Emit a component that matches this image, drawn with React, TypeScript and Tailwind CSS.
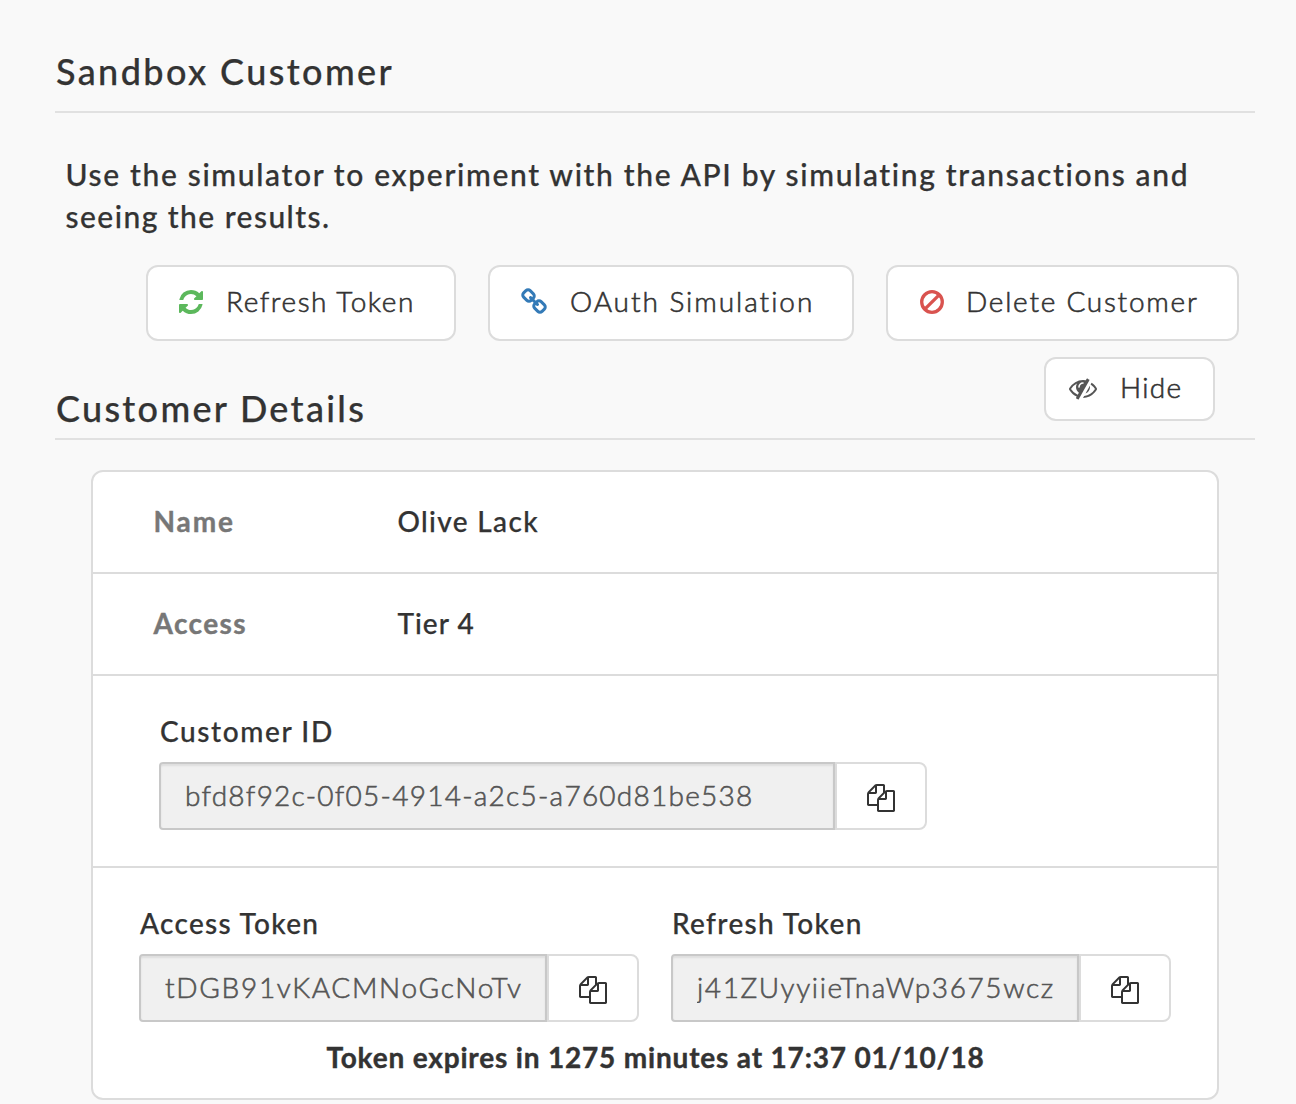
import type { ReactNode } from "react";

const ICONS = {
  refresh:
    "M1639 1056q0 5-1 7-64 268-268 434.5t-478 166.5q-146 0-282.5-55t-243.5-157l-129 129q-19 19-45 19t-45-19-19-45v-448q0-26 19-45t45-19h448q26 0 45 19t19 45-19 45l-137 137q71 66 161 102t187 36q134 0 250-65t186-179q11-17 53-117 8-23 30-23h192q13 0 22.5 9.5t9.5 22.5zm25-800v448q0 26-19 45t-45 19h-448q-26 0-45-19t-19-45 19-45l138-138q-148-137-349-137-134 0-250 65t-186 179q-11 17-53 117-8 23-30 23h-199q-13 0-22.5-9.5t-9.5-22.5v-7q65-268 270-434.5t480-166.5q146 0 284 55.5t245 156.5l130-129q19-19 45-19t45 19 19 45z",
  chain:
    "M1520 1216q0-40-28-68l-208-208q-28-28-68-28-42 0-72 32 3 3 19 18.5t21.5 21.5 15 19 13 25.5 3.5 27.5q0 40-28 68t-68 28q-15 0-27.5-3.5t-25.5-13-19-15-21.5-21.5-18.5-19q-33 31-33 73 0 40 28 68l206 207q27 27 68 27 40 0 68-26l147-146q28-28 28-67zm-703-705q0-40-28-68l-206-207q-28-28-68-28-39 0-68 27l-147 146q-28 28-28 67 0 40 28 68l208 208q27 27 68 27 42 0 72-31-3-3-19-18.5t-21.5-21.5-15-19-13-25.5-3.5-27.5q0-40 28-68t68-28q15 0 27.5 3.5t25.5 13 19 15 21.5 21.5 18.5 19q33-31 33-73zm895 705q0 120-85 203l-147 146q-83 83-203 83-121 0-204-85l-206-207q-83-83-83-203 0-123 88-209l-88-88q-86 88-208 88-120 0-204-84l-208-208q-84-84-84-204t85-203l147-146q83-83 203-83 121 0 204 85l206 207q83 83 83 203 0 123-88 209l88 88q86-88 208-88 120 0 204 84l208 208q84 84 84 204z",
  eyeSlash:
    "M555 1335l78-141q-87-63-136-159t-49-203q0-121 61-225-229 117-381 353 167 258 427 375zm389-759q0-20-14-34t-34-14q-125 0-214.5 89.5t-89.5 214.5q0 20 14 34t34 14 34-14 14-34q0-86 61-147t147-61q20 0 34-14t14-34zm363-191q0 7-1 9-106 189-316 567t-315 566l-49 89q-10 16-28 16-12 0-134-70-16-10-16-28 0-12 44-87-143-65-263.5-173t-208.5-245q-20-31-20-69t20-69q153-235 380-371t496-136q89 0 180 17l54-97q10-16 28-16 5 0 18 6t31 15.5 33 18.5 31.5 18.5 19.5 11.5q16 10 16 27zm37 447q0 139-79 253.5t-209 164.5l280-502q8 45 8 84zm448 128q0 35-20 69-39 64-109 145-150 172-347.5 267t-419.5 95l74-132q212-18 392.5-137t301.5-307q-115-179-282-294l63-112q95 64 182.5 153t144.5 182q20 34 20 69z",
  files:
    "M1696 384q40 0 68 28t28 68v1216q0 40-28 68t-68 28h-960q-40 0-68-28t-28-68v-288h-544q-40 0-68-28t-28-68v-672q0-40 20-88t48-76l408-408q28-28 76-48t88-20h416q40 0 68 28t28 68v328q68-40 128-40h416zm-544 213l-299 299h299v-299zm-640-384l-299 299h299v-299zm196 647l316-316v-416h-384v416q0 40-28 68t-68 28h-416v640h512v-256q0-40 20-88t48-76zm956 804v-1152h-384v416q0 40-28 68t-68 28h-416v640h896z",
};

function Icon({ name, className }: { name: keyof typeof ICONS; className?: string }) {
  return (
    <svg viewBox="0 0 1792 1792" fill="currentColor" className={`size-7 shrink-0 ${className ?? ""}`}>
      <path d={ICONS[name]} />
    </svg>
  );
}

function BanIcon() {
  return (
    <svg viewBox="0 0 24 24" fill="none" stroke="currentColor" strokeWidth="3.3" className="size-6 shrink-0 text-[#d9534f]">
      <circle cx="12" cy="12" r="10.3" />
      <path d="M4.8 19.2 19.2 4.8" />
    </svg>
  );
}

const light = "font-light [-webkit-text-stroke:0.6px_currentColor]";
const medium = "font-medium [-webkit-text-stroke:0.25px_currentColor]";
const bold = "font-bold [-webkit-text-stroke:0.4px_currentColor]";

function Button({ className, children }: { className: string; children: ReactNode }) {
  return (
    <button className={`flex items-center rounded-xl border-2 border-[#dcdcdc] bg-white ${className}`}>
      {children}
    </button>
  );
}

function CopyField({ value, label, width, tracking, labelTracking }: {
  value: string; label: string; width: string; tracking: string; labelTracking: string;
}) {
  return (
    <div>
      <div className={`mb-[15px] ml-px leading-8 ${medium} ${labelTracking}`}>{label}</div>
      <div className="flex h-[68px]">
        <div className={`flex items-center rounded-l border-2 border-[#c8c8c8] bg-[#f0f0f0] pb-0.5 pl-6 pr-[23px] text-[#555] shadow-[inset_0_2px_2px_rgba(0,0,0,0.075)] ${width}`}>
          <span className={`w-full overflow-hidden whitespace-nowrap leading-8 ${light} ${tracking}`}>{value}</span>
        </div>
        <button className="flex w-[92px] items-center justify-center rounded-r-lg border-2 border-[#dcdcdc] bg-white pt-1">
          <Icon name="files" />
        </button>
      </div>
    </div>
  );
}

export default function App() {
  return (
    <main className="h-[1104px] overflow-hidden bg-[#f9f9f9] pl-[55px] pr-[41px] pt-[51px] font-['Lato',sans-serif] text-[28px] leading-8 text-[#333]">
      <h1 className={`h-[62px] border-b-2 border-[#e1e1e1] pl-px text-[36px] leading-10 tracking-[2.4px] ${medium}`}>Sandbox Customer</h1>

      <p className={`ml-[10.5px] mt-10 text-[30px] leading-[42px] tracking-[1.65px] ${medium}`}>
        Use the simulator to experiment with the API by simulating transactions and
        <br />
        <span className="tracking-[1.45px]">seeing the results.</span>
      </p>

      <div className="mr-4 mt-7 flex h-[76px] justify-end gap-8">
        <Button className="w-[310px] pl-[29px]">
          <Icon name="refresh" className="-mt-0.5 text-[#5cb85c]" />
          <span className={`ml-[21px] pb-1 tracking-[1.55px] ${light}`}>Refresh Token</span>
        </Button>
        <Button className="w-[366px] pl-[30px]">
          <Icon name="chain" className="-mt-0.5 text-[#337ab7]" />
          <span className={`ml-[22px] pb-1 tracking-[1.95px] ${light}`}>OAuth Simulation</span>
        </Button>
        <Button className="w-[353px] pl-[31.5px]">
          <span className="-mt-0.5"><BanIcon /></span>
          <span className={`ml-[22.5px] pb-1 tracking-[1.75px] ${light}`}>Delete Customer</span>
        </Button>
      </div>

      <div className="mt-4 flex h-[83px] justify-between border-b-2 border-[#e1e1e1] pr-10">
        <h2 className={`ml-px mt-[31px] text-[36px] leading-10 tracking-[2.3px] ${medium}`}>Customer Details</h2>
        <Button className="h-16 w-[171px] pl-[23px]">
          <Icon name="eyeSlash" className="-mt-0.5 text-[#555]" />
          <span className={`ml-[23px] pb-1 tracking-[1.3px] ${light}`}>Hide</span>
        </Button>
      </div>

      <section className="ml-9 mr-9 mt-[30px] h-[630px] rounded-xl border-2 border-[#dcdcdc] bg-white">
        <div className="flex h-[102px] items-center border-b-2 border-[#dcdcdc] pb-0.5 pl-[60.5px]">
          <div className={`w-[244px] tracking-[1.9px] text-[#777] ${bold}`}>Name</div>
          <div className={`tracking-[1.35px] ${medium}`}>Olive Lack</div>
        </div>
        <div className="flex h-[102px] items-center border-b-2 border-[#dcdcdc] pb-0.5 pl-[60.5px]">
          <div className={`w-[244px] tracking-[1.4px] text-[#777] ${bold}`}>Access</div>
          <div className={`tracking-[1px] ${medium}`}>Tier 4</div>
        </div>
        <div className="h-[192px] border-b-2 border-[#dcdcdc] pl-[66px] pt-[39px]">
          <CopyField label="Customer ID" value="bfd8f92c-0f05-4914-a2c5-a760d81be538" width="w-[676px]" tracking="tracking-[1.25px]" labelTracking="tracking-[1.6px]" />
        </div>
        <div className="pl-[46px] pt-[39px]">
          <div className="flex gap-8">
            <CopyField label="Access Token" value="tDGB91vKACMNoGcNoTv" width="w-[408px]" tracking="tracking-[1.7px]" labelTracking="tracking-[1.3px]" />
            <CopyField label="Refresh Token" value="j41ZUyyiieTnaWp3675wcz" width="w-[408px]" tracking="tracking-[1.6px]" labelTracking="tracking-[1.35px]" />
          </div>
        </div>
        <div className={`mt-[19px] pl-px text-center tracking-[0.82px] ${bold}`}>Token expires in 1275 minutes at 17:37 01/10/18</div>
      </section>
    </main>
  );
}
